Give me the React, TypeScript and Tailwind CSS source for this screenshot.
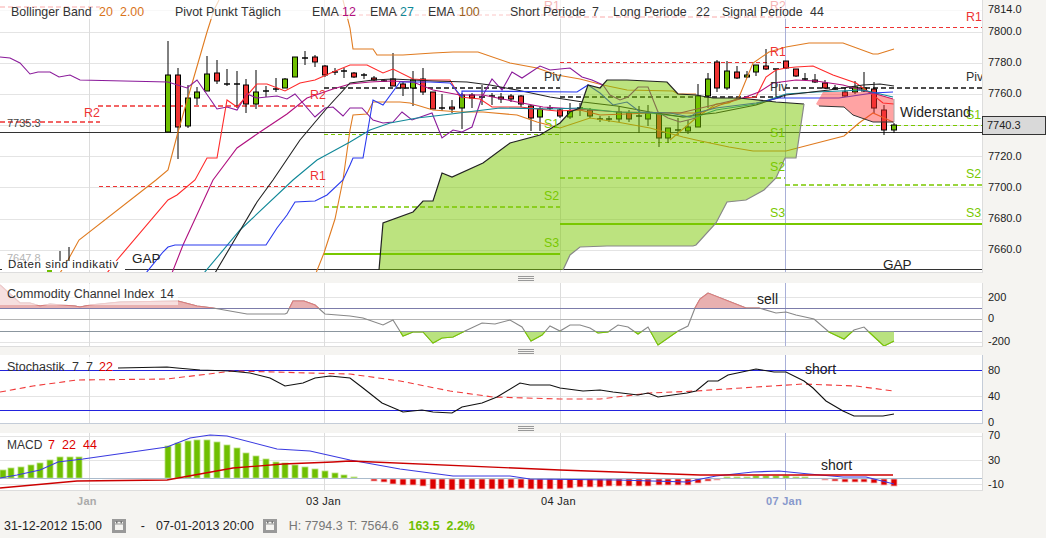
const GREEN = "#6fbf00";
const RED = "#ee3333";

// x, wick top, wick bottom, body top, body bottom, colour ("g", "r" or "d" for a doji)
type Candle = [number, number, number, number, number, "g" | "r" | "d"];

const candles: Candle[] = [
  [168, 41, 132, 75, 132, "g"], [178, 68, 159, 75, 127, "r"], [188, 85, 128, 98, 126, "g"],
  [197, 87, 105, 92, 98, "g"], [207, 56, 91, 74, 91, "g"], [217, 60, 84, 73, 81, "r"],
  [227, 69, 86, 84, 84, "d"], [237, 71, 108, 84, 84, "d"], [246, 79, 113, 85, 104, "r"],
  [256, 70, 109, 92, 104, "g"], [266, 86, 97, 91, 91, "d"], [276, 78, 92, 89, 89, "d"],
  [285, 78, 88, 79, 88, "g"], [295, 57, 77, 57, 77, "g"], [305, 51, 65, 58, 58, "d"],
  [315, 55, 67, 57, 62, "r"], [325, 65, 77, 66, 75, "r"], [335, 68, 75, 72, 72, "d"],
  [344, 68, 78, 71, 71, "d"], [354, 72, 78, 73, 77, "r"], [364, 73, 79, 75, 75, "d"],
  [374, 76, 81, 78, 80, "r"], [384, 79, 82, 81, 81, "d"], [393, 53, 86, 79, 86, "r"],
  [403, 82, 96, 84, 88, "r"], [413, 71, 106, 80, 88, "g"], [423, 68, 95, 79, 92, "r"],
  [433, 92, 109, 92, 109, "r"], [442, 94, 111, 108, 108, "d"], [452, 100, 113, 107, 109, "r"],
  [462, 93, 129, 95, 108, "g"], [472, 93, 108, 95, 98, "r"], [482, 85, 105, 97, 97, "d"],
  [492, 93, 105, 96, 96, "d"], [501, 93, 103, 97, 99, "r"], [511, 94, 102, 96, 99, "r"],
  [521, 95, 107, 96, 104, "r"], [531, 105, 131, 106, 118, "r"], [540, 107, 131, 109, 117, "g"],
  [550, 105, 110, 108, 108, "d"], [560, 108, 118, 110, 116, "r"], [570, 103, 119, 111, 117, "g"],
  [580, 103, 116, 108, 108, "d"], [590, 108, 118, 110, 116, "r"], [600, 116, 122, 119, 119, "d"],
  [609, 116, 122, 119, 119, "d"], [619, 107, 122, 112, 119, "g"], [629, 110, 122, 113, 119, "r"],
  [639, 106, 133, 116, 116, "d"], [648, 105, 126, 113, 119, "g"], [659, 112, 147, 113, 138, "r"],
  [668, 128, 143, 128, 138, "g"], [678, 118, 135, 130, 130, "d"], [688, 120, 134, 127, 131, "g"],
  [698, 84, 127, 96, 127, "g"], [708, 73, 108, 79, 96, "g"], [717, 60, 92, 62, 88, "r"],
  [727, 61, 90, 71, 88, "g"], [737, 66, 79, 72, 78, "r"], [747, 71, 78, 75, 77, "g"],
  [756, 65, 76, 65, 72, "g"], [766, 49, 70, 66, 69, "r"], [776, 69, 97, 69, 69, "d"],
  [786, 61, 69, 61, 68, "r"], [796, 69, 77, 69, 76, "r"], [805, 73, 80, 79, 79, "d"],
  [815, 74, 83, 80, 82, "r"], [825, 80, 89, 83, 88, "r"], [835, 85, 90, 89, 89, "d"],
  [845, 88, 97, 92, 96, "r"], [855, 81, 94, 87, 92, "g"], [864, 72, 92, 88, 91, "g"],
  [874, 82, 113, 89, 108, "r"], [884, 105, 135, 110, 130, "r"], [894, 123, 133, 125, 130, "g"],
];

const pts = (a: number[][]) => a.map((p) => p.join(",")).join(" ");

const bbUpper = [[60,273],[68,260],[79,240],[156,180],[168,170],[178,132],[207,32],[214,10],[219,0]];
const bbUpper2 = [[343,0],[350,28],[353,49],[373,49],[377,55],[403,55],[433,53],[453,52],[478,52],[510,63],[537,68],[557,75],[580,79],[603,85],[627,90],[673,91],[678,94],[696,94]];
const bbUpper3 = [[670,140],[696,118],[716,104],[729,103],[739,97],[753,63],[769,52],[786,47],[809,43],[843,43],[873,54],[878,54],[894,49]];
const bbLower = [[316,273],[324,253],[335,219],[343,180],[350,130],[353,115],[367,114],[373,102],[400,102],[410,103],[433,110],[460,112],[483,112],[517,115],[537,122],[560,128],[590,118],[617,122],[650,128],[683,137],[696,140],[729,147],[753,151],[786,151],[813,144],[844,136],[859,123],[873,113],[893,122]];
const redLine = [[107,273],[117,260],[168,200],[177,195],[195,180],[207,158],[217,158],[227,100],[237,107],[257,84],[267,84],[285,91],[300,83],[315,80],[333,72],[350,65],[367,65],[383,73],[393,69],[413,79],[427,80],[450,80],[460,97],[480,99],[492,107],[520,107],[547,110],[557,111],[580,110],[600,115],[650,113],[700,113],[720,105],[743,98],[756,97],[766,77],[776,70],[786,68],[796,67],[813,66],[833,75],[856,83],[873,95],[883,103],[894,104]];
const purple = [[0,57],[10,58],[20,63],[30,74],[38,72],[50,72],[59,77],[70,75],[80,80],[168,82],[187,88],[197,80],[217,109],[227,107],[237,110],[247,94],[257,98],[277,96],[287,99],[295,94],[315,117],[325,108],[333,107],[343,116],[350,108],[362,108],[373,120],[383,123],[393,122],[402,112],[412,120],[432,113],[442,138],[453,130],[462,132],[472,127],[482,97],[492,79],[502,90],[512,72],[522,78],[540,66],[550,70],[570,68],[582,77],[592,80],[603,85],[610,95],[620,100],[628,97],[638,87],[648,87],[658,112],[668,118],[680,122],[696,118]];
const magenta = [[172,273],[183,245],[213,180],[237,148],[260,132],[287,114],[307,98],[333,89],[350,84],[370,82],[390,81],[413,82],[433,90],[460,95],[483,95],[517,102],[543,107],[560,108],[620,112],[680,113],[743,98],[759,92],[773,83],[796,80],[816,81],[843,85],[869,92],[893,99]];
const teal = [[204,273],[240,230],[293,180],[317,160],[350,142],[370,130],[390,123],[417,118],[443,115],[467,112],[500,108],[550,109],[580,108],[617,112],[650,113],[683,117],[696,117],[716,110],[756,104],[786,94],[816,92],[863,90],[893,97]];
const blackLine = [[215,273],[257,202],[273,180],[300,140],[327,108],[350,83],[373,80],[393,79],[433,81],[467,82],[490,85],[517,90],[550,97],[583,102],[617,106],[650,112],[683,117],[696,115],[716,113],[756,105],[786,95],[829,90],[863,85],[880,84],[894,86]];
const blue = [[146,273],[163,252],[168,247],[175,245],[266,245],[277,228],[287,215],[295,202],[315,201],[327,195],[343,180],[350,165],[353,158],[363,158],[373,100],[383,105],[400,82],[430,82],[450,83],[462,97],[462,91],[577,92],[588,85],[600,93],[613,105],[627,102],[640,112],[670,113],[690,117],[696,113],[716,108],[756,103],[779,98],[839,98],[873,93],[893,92]];

const cloudTop = [[379,270],[383,223],[413,212],[423,201],[433,201],[442,173],[452,177],[483,163],[510,143],[540,135],[560,123],[570,112],[580,108],[588,85],[600,88],[607,80],[627,80],[667,82],[678,94],[696,95],[713,98],[739,98],[776,102],[804,104]];
const cloudBottom = [[804,104],[796,158],[785,158],[776,178],[764,190],[746,200],[727,202],[716,223],[696,245],[693,246],[607,246],[580,247],[570,255],[563,270]];

const redCloud = [[816,104],[823,92],[869,92],[894,99],[894,122],[873,122],[853,115],[844,107],[819,106]];

const cci = [[0,285],[20,303],[30,303],[40,306],[50,304],[75,306],[80,307],[90,305],[120,302],[178,301],[197,306],[213,308],[247,314],[285,314],[287,313],[293,301],[304,301],[315,305],[325,314],[350,316],[363,318],[383,325],[393,320],[403,336],[413,332],[423,332],[433,343],[442,338],[453,337],[465,331],[482,323],[495,324],[510,320],[522,327],[531,341],[542,335],[550,326],[560,331],[570,325],[580,325],[590,328],[598,333],[608,332],[618,325],[628,327],[638,334],[648,327],[658,345],[678,331],[688,326],[695,308],[700,299],[708,293],[746,308],[759,308],[776,313],[786,312],[796,315],[814,319],[829,332],[844,339],[854,330],[864,327],[869,332],[884,346],[894,341]];

const stochK = [[118,368],[167,367],[177,368],[200,370],[230,371],[250,373],[270,378],[285,386],[303,383],[315,378],[330,376],[350,378],[363,388],[382,403],[403,412],[422,410],[433,412],[452,413],[462,407],[482,403],[497,397],[520,383],[530,385],[550,385],[560,388],[583,391],[600,390],[613,392],[638,395],[648,393],[658,397],[687,393],[696,391],[708,381],[718,381],[728,375],[756,369],[774,372],[786,372],[804,381],[813,388],[826,401],[843,411],[854,416],[883,416],[894,414]];
const stochD = [[0,392],[33,386],[77,380],[167,379],[233,371],[350,374],[400,381],[450,391],[493,397],[560,399],[600,399],[650,393],[696,391],[756,387],[803,384],[856,386],[893,391]];

const macdBlue = [[0,478],[17,475],[40,470],[58,462],[83,459],[167,447],[190,438],[210,435],[227,436],[277,449],[310,451],[350,460],[400,469],[453,476],[510,476],[530,479],[617,480],[687,482],[696,480],[716,476],[753,472],[779,471],[809,474],[843,477],[866,477],[894,484]];
const macdRed = [[0,488],[77,481],[167,480],[200,474],[233,468],[283,464],[333,462],[350,461],[560,470],[700,475],[763,475],[893,475]];

// x, value end of the bar (y on the page)
const macdGreen = [[3,470],[11,468],[21,467],[31,465],[40,463],[50,460],[60,457],[70,457],[79,457],[168,446],[178,443],[188,441],[197,440],[207,440],[217,442],[227,445],[237,448],[246,453],[256,456],[266,459],[276,462],[285,463],[295,465],[305,467],[315,469],[325,471],[335,473],[344,475],[354,477],[727,477],[737,477],[747,477],[756,476],[766,476],[776,476],[786,476],[796,477],[805,477]];
const macdBars = [[374,481],[384,482],[393,484],[403,485],[413,485],[423,486],[433,489],[442,489],[452,490],[462,489],[472,489],[482,489],[492,489],[501,489],[511,488],[521,488],[531,489],[540,489],[550,489],[560,489],[570,488],[580,487],[590,487],[600,487],[609,486],[619,486],[629,486],[639,486],[648,486],[659,485],[668,485],[678,485],[688,485],[698,483],[708,481],[717,480],[825,480],[835,481],[845,482],[855,482],[864,482],[874,483],[884,485],[894,486]];

// pivot levels: x1, x2, y
const r2Lines = [[0,100,122],[98,324,106]];
const r1Lines = [[99,324,186],[560,785,62],[785,982,27]];
const pivLines = [[324,560,88],[560,785,97],[785,982,88]];
const s1Lines = [[324,560,134],[560,785,142],[785,982,125]];
const s2Lines = [[324,560,207],[560,785,178],[785,982,185]];
const s3Lines = [[324,560,254],[560,785,224],[785,982,224]];

const pivotLabels: [string, number, number, string][] = [
  ["R2",84,117,"#ee3333"],["R2",310,99,"#ee3333"],["R1",310,180,"#ee3333"],["R1",770,56,"#ee3333"],["R1",966,21,"#ee3333"],
  ["Piv",544,81,"#333333"],["Piv",770,91,"#333333"],["Piv",966,81,"#333333"],
  ["S1",544,128,"#79c800"],["S1",770,137,"#79c800"],["S1",966,119,"#79c800"],
  ["S2",544,200,"#79c800"],["S2",770,171,"#79c800"],["S2",966,178,"#79c800"],
  ["S3",544,247,"#79c800"],["S3",770,217,"#79c800"],["S3",966,217,"#79c800"],
];

const legend: [string, number, string][] = [
  ["Bollinger Band",11,"#333333"],["20",99,"#d9731a"],["2.00",120,"#d9731a"],
  ["Pivot Punkt",175,"#333333"],["Täglich",241,"#333333"],
  ["EMA",312,"#333333"],["12",342,"#b0107f"],["EMA",370,"#333333"],["27",400,"#108898"],
  ["EMA",428,"#333333"],["100",459,"#996020"],
  ["Short Periode",510,"#333333"],["7",592,"#333333"],
  ["Long Periode",613,"#333333"],["22",696,"#333333"],
  ["Signal Periode",722,"#333333"],["44",810,"#333333"],
];

function Grid({ ys, top, bottom }: { ys: number[]; top: number; bottom: number }) {
  return (
    <g>
      {ys.map((y) => (
        <line key={y} x1={0} x2={982} y1={y + 0.5} y2={y + 0.5} stroke="#e4e4e4" />
      ))}
      <line x1={89.5} x2={89.5} y1={top} y2={bottom} stroke="#dcdcdc" />
      <line x1={324.5} x2={324.5} y1={top} y2={bottom} stroke="#dcdcdc" />
      <line x1={560.5} x2={560.5} y1={top} y2={bottom} stroke="#dcdcdc" />
      <line x1={785.5} x2={785.5} y1={top} y2={bottom} stroke="#a9b0d8" />
    </g>
  );
}

function Line({ p, c, w = 1.1, dash }: { p: number[][]; c: string; w?: number; dash?: string }) {
  return <polyline points={pts(p)} fill="none" stroke={c} strokeWidth={w} strokeDasharray={dash} />;
}

function MainChart() {
  return (
    <svg viewBox="0 0 982 272" className="w-[982px] h-[272px] bg-white block shrink-0 text-[12.4px]">
      <Grid ys={[10, 32, 63, 94, 125, 156, 187, 219, 250]} top={0} bottom={272} />
      {r1Lines.map((l) => (
        <line key={l[2]} x1={l[0]} x2={l[1]} y1={l[2] + 0.5} y2={l[2] + 0.5} stroke="#ee3333" strokeDasharray="4 3" />
      ))}
      {r2Lines.map((l) => (
        <line key={l[2]} x1={l[0]} x2={l[1]} y1={l[2]} y2={l[2]} stroke="#ee3333" strokeWidth={1.6} strokeDasharray="5 3" />
      ))}
      <line x1={0} x2={100} y1={7} y2={7} stroke="#ee3333" strokeWidth={1.6} strokeDasharray="5 3" />
      <line x1={324} x2={560} y1={15} y2={15} stroke="#ee3333" strokeDasharray="4 3" />
      <line x1={560} x2={785} y1={17} y2={17} stroke="#ee3333" strokeWidth={1.6} strokeDasharray="5 3" />
      {pivLines.map((l) => (
        <line key={l[2]} x1={l[0]} x2={l[1]} y1={l[2]} y2={l[2]} stroke="#111111" strokeWidth={1.6} strokeDasharray="5 3" />
      ))}
      {s1Lines.map((l) => (
        <line key={l[2]} x1={l[0]} x2={l[1]} y1={l[2] + 0.5} y2={l[2] + 0.5} stroke="#79c800" strokeDasharray="4 3" />
      ))}
      {s2Lines.map((l) => (
        <line key={l[2]} x1={l[0]} x2={l[1]} y1={l[2]} y2={l[2]} stroke="#79c800" strokeWidth={1.6} strokeDasharray="5 3" />
      ))}
      {s3Lines.map((l) => (
        <line key={l[2]} x1={l[0]} x2={l[1]} y1={l[2]} y2={l[2]} stroke="#79c800" strokeWidth={2} />
      ))}

      <line x1={0} x2={982} y1={132.5} y2={132.5} stroke="#333333" />
      <line x1={0} x2={982} y1={269.5} y2={269.5} stroke="#333333" />

      {candles.map(([x, wt, wb, bt, bb, k], i) => (
        <g key={i}>
          <line x1={x} x2={x} y1={wt} y2={wb} stroke="#000000" />
          {k === "d" ? (
            <line x1={x - 3} x2={x + 3} y1={bt} y2={bt} stroke="#000000" strokeWidth={1.5} />
          ) : (
            <rect x={x - 2.5} y={bt} width={5} height={bb - bt} fill={k === "g" ? GREEN : RED} stroke="#000000" />
          )}
        </g>
      ))}

      <Line p={bbUpper} c="#e07b20" />
      <Line p={bbUpper2} c="#e07b20" />
      <Line p={bbUpper3} c="#e07b20" />
      <Line p={bbLower} c="#e07b20" />
      <Line p={purple} c="#8a1a9a" />
      <Line p={redLine} c="#ff2a2a" />
      <Line p={magenta} c="#b0107f" />
      <Line p={teal} c="#108898" />
      <Line p={blackLine} c="#222222" />
      <Line p={blue} c="#2a3aee" />

      {/* ichimoku cloud goes over the candles, they shine through it */}
      <polygon points={pts([...cloudTop, ...cloudBottom])} fill="#79c800" fillOpacity={0.5} />
      <polyline points={pts(cloudTop)} fill="none" stroke="#222222" strokeWidth={1.2} />
      <polyline points={pts(cloudBottom)} fill="none" stroke="#888888" strokeWidth={1.2} />
      <polygon points={pts(redCloud)} fill="#ff3333" fillOpacity={0.45} />
      <polyline points={pts(redCloud.slice(4))} fill="none" stroke="#333333" />
      <line x1={894} x2={894} y1={99} y2={122} stroke="#aaaaaa" />

      {/* legend strip, half covers what runs under it */}
      <rect x={0} y={0} width={982} height={19} fill="#ffffff" fillOpacity={0.72} />
      <text x={544} y={10} fill="#f5b5b5">R1</text>
      <text x={770} y={10} fill="#f5b5b5">R2</text>
      {legend.map(([t, x, c], i) => (
        <text key={i} x={x} y={16} fill={c}>{t}</text>
      ))}

      {pivotLabels.map(([t, x, y, c], i) => (
        <text key={i} x={x} y={y} fill={c}>{t}</text>
      ))}
      <text x={7} y={127} fill="#444444" fontSize={11}>7735.3</text>
      <text x={7} y={262} fill="#b5b5b5" fontSize={11}>7647.8</text>
      <line x1={60} x2={60} y1={251} y2={262} stroke="#000000" />
      <line x1={69} x2={69} y1={247} y2={262} stroke="#000000" />

      <rect x={2} y={261} width={123} height={9} fill="#ffffff" />
      <text x={8} y={268} fill="#222222" fontSize={11.5} letterSpacing={0.55}>Daten sind indikativ</text>
      <rect x={47} y={270} width={5} height={2} fill={GREEN} />

      <text x={132} y={263} fill="#222222" fontSize={13.5}>GAP</text>
      <text x={883} y={269} fill="#222222" fontSize={13.5}>GAP</text>
      <text x={900} y={117} fill="#222222" fontSize={14}>Widerstand</text>
    </svg>
  );
}

function CciChart() {
  return (
    <svg viewBox="0 283 982 63" className="w-[982px] h-[63px] bg-white block shrink-0 text-[12.5px]">
      <defs>
        <clipPath id="cciUp"><rect x={0} y={283} width={982} height={25} /></clipPath>
        <clipPath id="cciDown"><rect x={0} y={331.5} width={982} height={16} /></clipPath>
      </defs>
      <Grid ys={[297, 342]} top={283} bottom={346} />
      <line x1={0} x2={982} y1={308.5} y2={308.5} stroke="#7c7caa" />
      <line x1={0} x2={982} y1={319.5} y2={319.5} stroke="#b4b4b4" />
      <line x1={0} x2={982} y1={331.5} y2={331.5} stroke="#7c7caa" />
      <Line p={cci} c="#888888" />
      <g clipPath="url(#cciUp)">
        <polygon points={pts([[0, 308], ...cci, [894, 308]])} fill="#e8b0b0" />
        <Line p={cci} c="#dc7c7c" />
      </g>
      <g clipPath="url(#cciDown)">
        <polygon points={pts([[0, 331.5], ...cci, [894, 331.5]])} fill="#b9e27f" />
        <Line p={cci} c="#79c800" />
      </g>
      <rect x={0} y={284} width={178} height={21} fill="#ffffff" fillOpacity={0.6} />
      <text x={7} y={298} fill="#333333">Commodity Channel Index</text>
      <text x={160} y={298} fill="#333333">14</text>
      <text x={757} y={304} fill="#222222" fontSize={14}>sell</text>
    </svg>
  );
}

function StochChart() {
  return (
    <svg viewBox="0 355 982 68" className="w-[982px] h-[68px] bg-white block shrink-0 text-[12.5px]">
      <Grid ys={[396]} top={355} bottom={423} />
      <line x1={0} x2={982} y1={370.5} y2={370.5} stroke="#2222dd" />
      <line x1={0} x2={982} y1={410.5} y2={410.5} stroke="#2222dd" />
      <Line p={stochD} c="#f03a3a" dash="6 4" />
      <Line p={stochK} c="#111111" />
      <rect x={0} y={357} width={117} height={13} fill="#ffffff" fillOpacity={0.7} />
      <text x={7} y={371} fill="#333333">Stochastik</text>
      <text x={72} y={371} fill="#333333">7</text>
      <text x={86} y={371} fill="#333333">7</text>
      <text x={99} y={371} fill="#dd0000">22</text>
      <text x={805} y={374} fill="#222222" fontSize={14}>short</text>
    </svg>
  );
}

function MacdChart() {
  return (
    <svg viewBox="0 433 982 57" className="w-[982px] h-[57px] bg-white block shrink-0 text-[12.5px]">
      <Grid ys={[436, 460, 484]} top={433} bottom={490} />
      {macdGreen.map(([x, y]) => (
        <rect key={x} x={x - 3} y={y} width={6} height={478 - y} fill={GREEN} stroke="#b9e27f" strokeWidth={0.8} />
      ))}
      {macdBars.map(([x, y]) => (
        <rect key={x} x={x - 3} y={479} width={6} height={y - 479} fill="#dd0000" stroke="#f3b9b9" strokeWidth={0.8} />
      ))}
      <line x1={0} x2={982} y1={478.5} y2={478.5} stroke="#aabbcc" />
      <Line p={macdBlue} c="#3a3ae0" />
      <Line p={macdRed} c="#cc0000" w={1.3} />
      <text x={7} y={449} fill="#333333" fontSize={12}>MACD</text>
      <text x={48} y={449} fill="#dd0000">7</text>
      <text x={62} y={449} fill="#dd0000">22</text>
      <text x={83} y={449} fill="#dd0000">44</text>
      <text x={821} y={470} fill="#222222" fontSize={14}>short</text>
    </svg>
  );
}

// axis column, labels hang on the scale of the chart next to it
function Axis({ top, height, labels }: { top: number; height: number; labels: [string, number][] }) {
  return (
    <svg viewBox={`983 ${top} 63 ${height}`} className="w-[63px] block shrink-0 overflow-visible text-[11px]" style={{ height }}>
      {labels.map(([t, y]) => (
        <text key={t} x={988} y={y} fill="#222222">{t}</text>
      ))}
    </svg>
  );
}

function Handle({ h }: { h: string }) {
  return (
    <div className={`${h} w-[1052px] flex flex-col items-center justify-center gap-[1px]`}>
      <div className="w-[16px] h-[1px] bg-[#999999]" />
      <div className="w-[16px] h-[1px] bg-[#999999]" />
      <div className="w-[16px] h-[1px] bg-[#999999]" />
    </div>
  );
}

function Panel({ border, children }: { border: string; children: React.ReactNode }) {
  return <div className={`w-[983px] shrink-0 border-r border-b ${border}`}>{children}</div>;
}

function CalIcon({ ml }: { ml: string }) {
  return (
    <svg viewBox="0 0 14 14" className={`w-[14px] h-[14px] ${ml}`}>
      <rect x={0} y={0} width={14} height={14} fill="#999999" />
      <rect x={3} y={3} width={8} height={8} fill="#f5f4f1" />
      <rect x={4} y={2} width={1.5} height={2.5} fill="#777777" />
      <rect x={8.5} y={2} width={1.5} height={2.5} fill="#777777" />
      <rect x={3} y={4.5} width={8} height={1} fill="#999999" />
    </svg>
  );
}

export default function App() {
  return (
    <div className="w-[1046px] h-[538px] overflow-hidden bg-[#f5f4f1] flex flex-col font-['Liberation_Sans',Arial,sans-serif]">
      <div className="flex">
        <Panel border="border-[#dddddd]"><MainChart /></Panel>
        <div className="relative">
          <Axis
            top={0}
            height={272}
            labels={[["7814.0",13],["7800.0",35],["7780.0",66],["7760.0",97],["7720.0",160],["7700.0",191],["7680.0",222],["7660.0",253]]}
          />
          {/* last price tag */}
          <div className="absolute left-[-1px] top-[116px] w-[64px] h-[19px] bg-[#d9d9d9] border border-[#333333] text-[11px] text-[#222222] leading-[17px] pl-[4px]">
            7740.3
          </div>
        </div>
      </div>
      <Handle h="h-[10px]" />

      <div className="flex">
        <Panel border="border-[#dddddd]"><CciChart /></Panel>
        <Axis top={283} height={63} labels={[["200",301],["0",322],["-200",345]]} />
      </div>
      <Handle h="h-[8px]" />

      <div className="flex">
        <Panel border="border-[#c4ccd8]"><StochChart /></Panel>
        <Axis top={355} height={68} labels={[["80",374],["40",400],["0",426]]} />
      </div>
      <Handle h="h-[9px]" />

      <div className="flex">
        <Panel border="border-[#dddddd]"><MacdChart /></Panel>
        <Axis top={433} height={57} labels={[["70",439],["30",464],["-10",488]]} />
      </div>

      <div className="flex h-[20px] items-center text-[11px] text-[#222222] tracking-[0.3px]">
        <span className="ml-[77px] w-[229px] text-[#aaaaaa] font-bold">Jan</span>
        <span className="w-[235px]">03 Jan</span>
        <span className="w-[225px]">04 Jan</span>
        <span className="text-[#8899cc] font-bold">07 Jan</span>
      </div>
      <div className="flex items-center mt-[6px] pl-[4px] text-[12.4px] text-[#222222]">
        <span>31-12-2012 15:00</span>
        <CalIcon ml="ml-[10px]" />
        <span className="ml-[15px]">-</span>
        <span className="ml-[11px]">07-01-2013 20:00</span>
        <CalIcon ml="ml-[9px]" />
        <span className="ml-[12px] text-[#777777]">H: 7794.3</span>
        <span className="ml-[5px] text-[#777777]">T: 7564.6</span>
        <span className="ml-[10px] text-[#6fbf00] font-bold">163.5</span>
        <span className="ml-[7px] text-[#6fbf00] font-bold">2.2%</span>
      </div>
    </div>
  );
}
